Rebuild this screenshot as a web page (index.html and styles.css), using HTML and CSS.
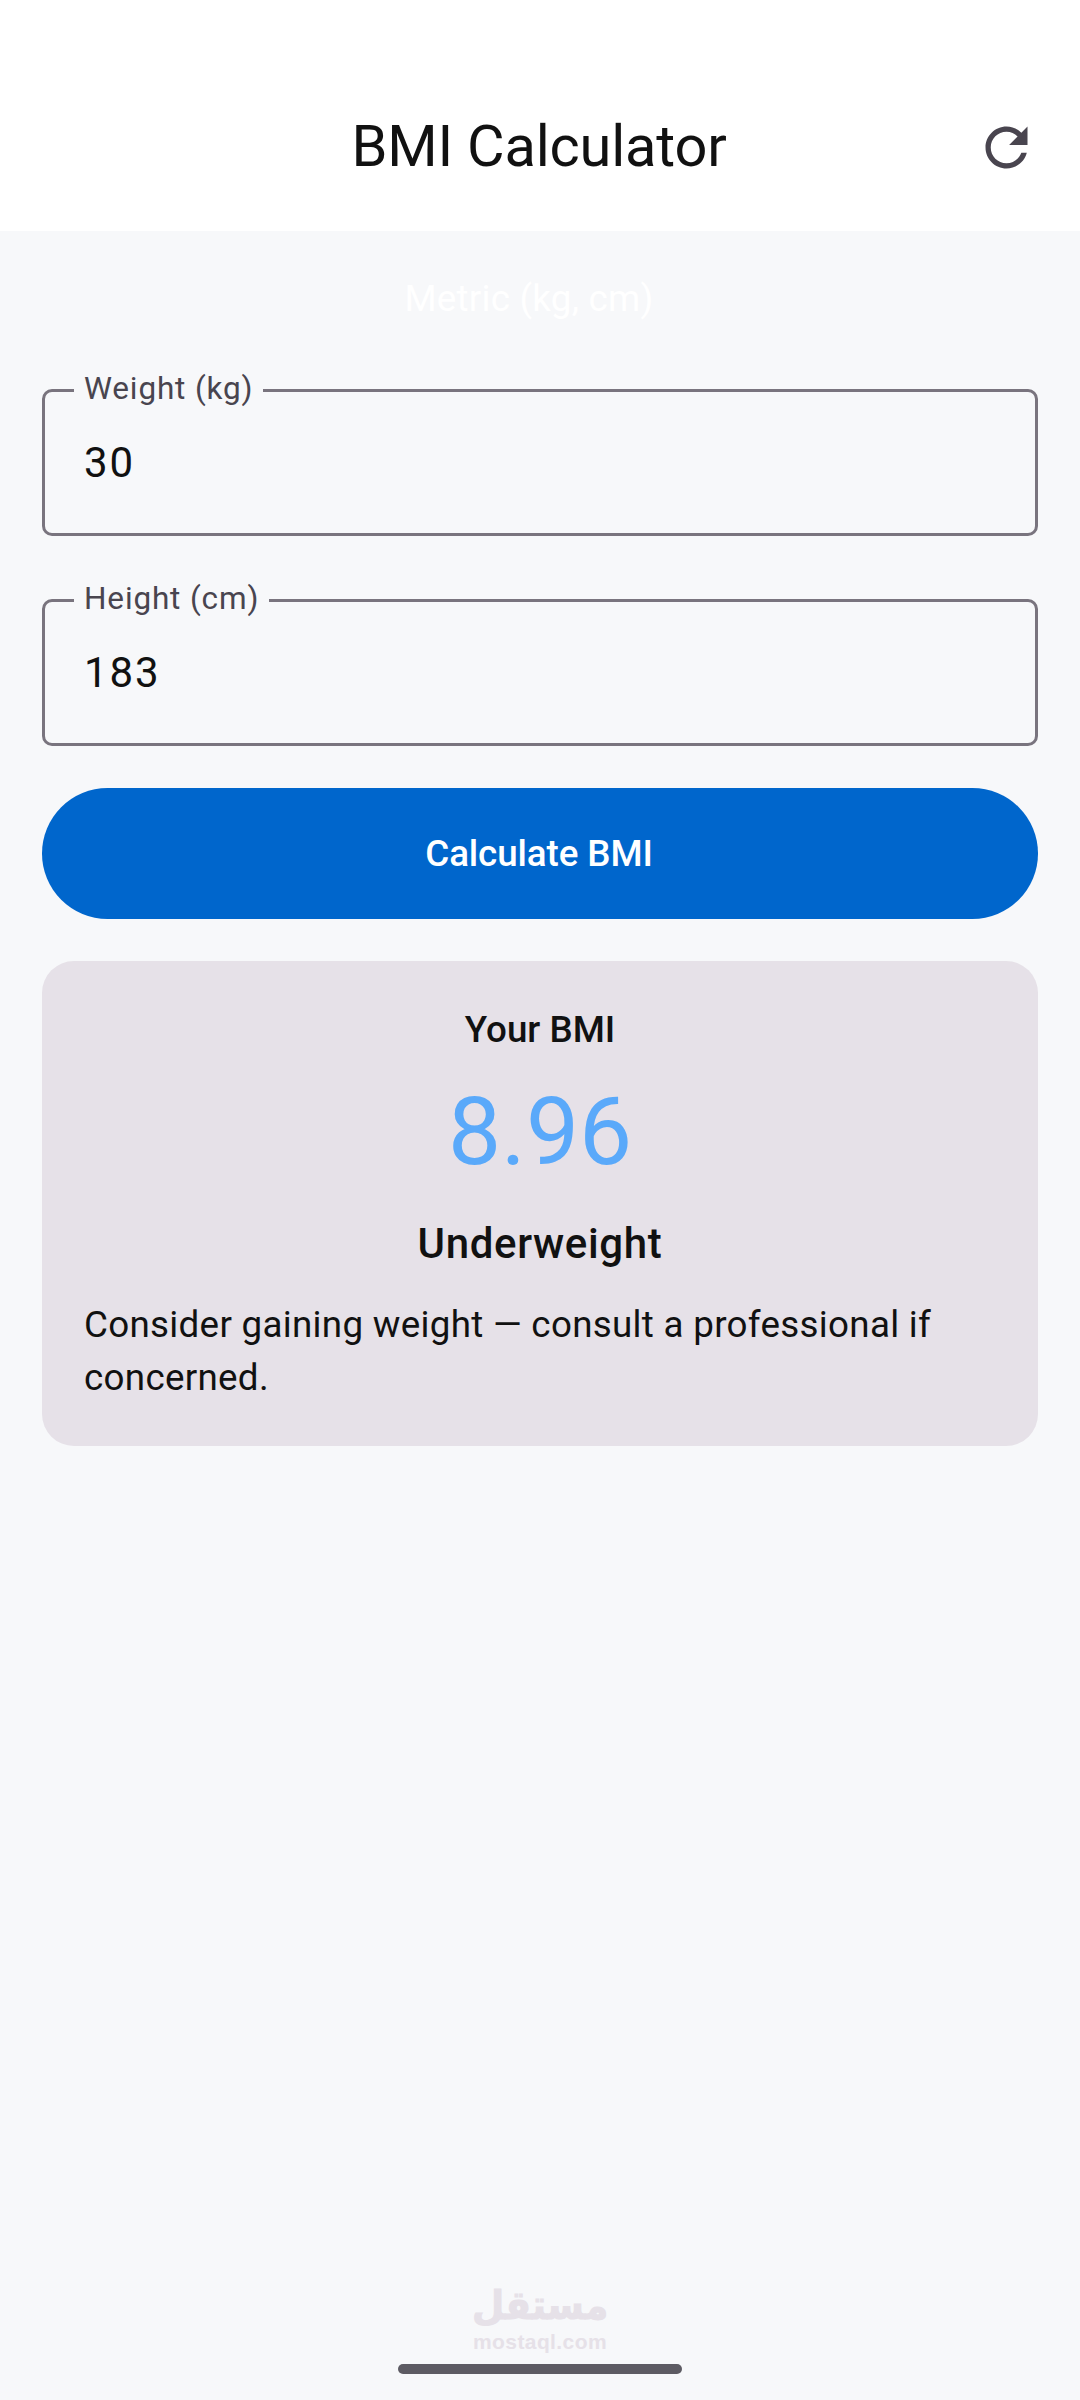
FILE: index.html
```html
<!DOCTYPE html>
<html lang="en">
<head>
<meta charset="utf-8">
<title>BMI Calculator</title>
<link rel="stylesheet" href="styles.css">
</head>
<body>
<div class="screen">
  <header class="appbar">
    <h1 class="title">BMI Calculator</h1>
    <svg class="refresh" viewBox="0 0 24 24" aria-label="Reset"><path d="M17.65 6.35C16.2 4.9 14.21 4 12 4c-4.42 0-7.99 3.58-7.99 8s3.57 8 7.99 8c3.73 0 6.84-2.55 7.73-6h-2.08c-.82 2.33-3.04 4-5.65 4-3.31 0-6-2.69-6-6s2.69-6 6-6c1.66 0 3.14.69 4.22 1.78L13 11h7V4l-2.35 2.35z"/></svg>
  </header>
  <main class="content">
    <div class="segment">Metric (kg, cm)</div>
    <div class="field">
      <span class="field-label">Weight (kg)</span>
      <span class="field-value">30</span>
    </div>
    <div class="field">
      <span class="field-label">Height (cm)</span>
      <span class="field-value">183</span>
    </div>
    <button class="cta">Calculate BMI</button>
    <section class="card">
      <div class="card-heading">Your BMI</div>
      <div class="card-number">8.96</div>
      <div class="card-category">Underweight</div>
      <p class="card-advice">Consider gaining weight — consult a professional if concerned.</p>
    </section>
  </main>
  <footer class="footer">
    <div class="mark-ar" lang="ar" dir="rtl">مستقل</div>
    <div class="mark-en">mostaql.com</div>
    <div class="home-bar"></div>
  </footer>
</div>
</body>
</html>
```

FILE: styles.css
```css
* { box-sizing: border-box; }
html, body { margin: 0; padding: 0; }
body { font-family: Roboto, "Liberation Sans", sans-serif; color: #1a1b1f; background: #f7f8fa; }
.screen { width: 1080px; height: 2400px; display: flex; flex-direction: column; overflow: hidden; }
.appbar { height: 231px; background: #fff; padding: 115px 2px 0 0; position: relative; flex: none; }
.title { margin: 0; font-size: 57.75px; line-height: 63px; font-weight: 400; letter-spacing: -.2px; text-align: center; color: #111; }
.refresh { position: absolute; left: 975px; top: 115.5px; width: 63px; height: 63px; fill: #49454f; }
.content { padding: 45px 42px 0; display: flex; flex-direction: column; }
.segment { height: 46px; line-height: 46px; font-size: 36.75px; color: #fff; text-align: center; padding-right: 22px; letter-spacing: .25px; margin-bottom: 67px; }
.field { position: relative; height: 147px; border: 3px solid #79747e; border-radius: 10px; margin-bottom: 63px; padding: 0 39px; display: flex; align-items: center; }
.field + .field { margin-bottom: 42px; }
.field-label { position: absolute; left: 29px; top: -23px; padding: 0 10px; background: #f7f8fa; font-size: 31.5px; line-height: 40px; letter-spacing: .85px; color: #49454f; }
.field-value { font-size: 42px; letter-spacing: 1.9px; color: #111; }
.cta { height: 131px; border: 0; border-radius: 66px; background: #0066cc; color: #fff; font: 500 36.75px Roboto, sans-serif; letter-spacing: -.1px; display: block; width: 100%; margin-bottom: 42px; padding: 0 2px 0 0; }
.card { height: 485px; background: #e6e1e8; border-radius: 32px; padding: 43px 42px 0; }
.card-heading { font-size: 36.75px; line-height: 52px; font-weight: 500; text-align: center; color: #111; }
.card-number { font-size: 94.5px; line-height: 110px; font-weight: 400; text-align: center; color: #5aa9fa; margin-top: 21px; }
.card-category { font-size: 42px; line-height: 58px; font-weight: 500; text-align: center; color: #111; letter-spacing: .65px; margin-top: 28px; }
.card-advice { margin: 25px 0 0; font-size: 36.75px; line-height: 53px; letter-spacing: .3px; color: #111; }
.footer { margin-top: auto; display: flex; flex-direction: column; align-items: center; padding-bottom: 26px; }
.mark-ar { font-family: "DejaVu Sans", sans-serif; font-weight: 700; font-size: 40px; line-height: 32px; color: #e6e1e8; transform: scaleX(.93); -webkit-text-stroke: 1px #e6e1e8; }
.mark-en { font-family: "Liberation Sans", sans-serif; font-weight: 700; font-size: 21px; line-height: 24px; color: #e6e1e8; margin-top: 9px; margin-bottom: 10px; letter-spacing: .4px; }
.home-bar { width: 284px; height: 10px; border-radius: 5px; background: #5d5b63; }
```
